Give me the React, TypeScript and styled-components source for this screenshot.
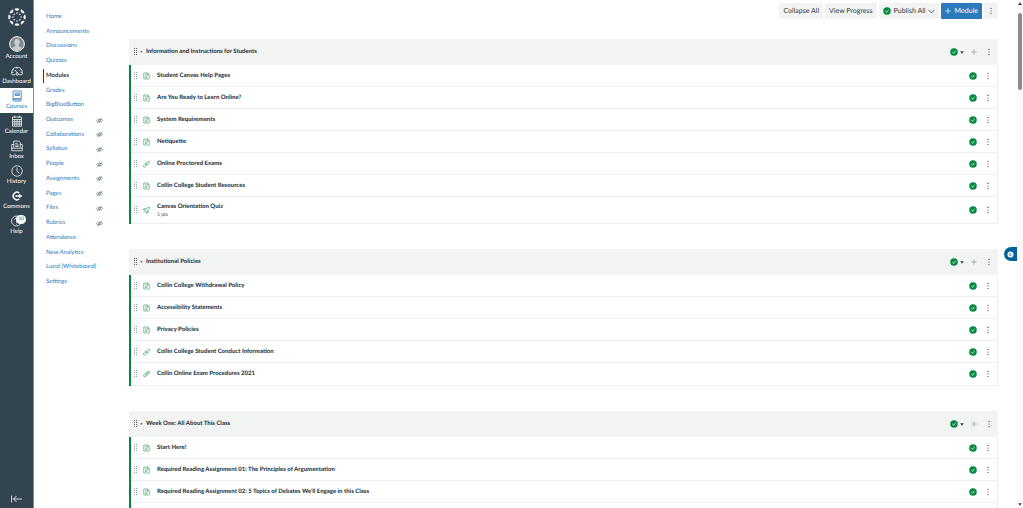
import React from "react";
import styled, { createGlobalStyle } from "styled-components";

const ink = "#2d3b45";
const link = "#2b7abc";
const green = "#03893d";
const panel = "#f2f4f4";

const GlobalStyle = createGlobalStyle`
  *, *::before, *::after { box-sizing: border-box; }
  body { margin: 0; background: #fff; color: ${ink}; font: 6px/10px Lato, "Liberation Sans", sans-serif; text-rendering: geometricPrecision; overflow: hidden; }
  button { font: inherit; color: inherit; border: 0; padding: 0; background: none; cursor: pointer; text-rendering: inherit; }
  a { text-decoration: none; color: inherit; }
  ul { list-style: none; margin: 0; padding: 0; }
  svg { display: block; flex: none; }
`;

const Shell = styled.div`
  display: grid;
  grid-template-columns: 34px 95px minmax(0, 1fr) 7px;
  height: 100vh;
  overflow: hidden;
`;

const Rail = styled.nav`
  display: flex;
  flex-direction: column;
  background: #334451;
  border-right: 1px solid #7d8890;
  color: #fff;
`;

const LogoLink = styled.a`
  display: grid;
  place-items: center;
  height: 34px;
`;

const RailLink = styled.a<{ $active?: boolean; $tall?: boolean }>`
  position: relative;
  display: flex;
  flex-direction: column;
  align-items: center;
  justify-content: flex-end;
  gap: 1px;
  height: ${(p) => (p.$tall ? 29 : 25)}px;
  padding-bottom: 2px;
  line-height: 8px;
  color: ${(p) => (p.$active ? link : "#fff")};
  background: ${(p) => (p.$active ? "#fff" : "transparent")};
`;

const Badge = styled.span`
  position: absolute;
  top: 2px;
  right: 7px;
  padding: 0 2px;
  border-radius: 5px;
  background: #fff;
  color: ${ink};
  font-size: 5px;
  line-height: 9px;
`;

const CollapseRail = styled.button`
  display: grid;
  place-items: center;
  height: 18px;
  margin-top: auto;
`;

const CourseNav = styled.nav`
  padding: 10px 26px 0 12px;
`;

const CourseList = styled.ul`
  display: flex;
  flex-direction: column;
  justify-content: space-between;
  min-height: 279px;
`;

const CourseItem = styled.li<{ $active?: boolean }>`
  display: flex;
  align-items: center;
  justify-content: space-between;
  height: 14px;
  margin-left: -3px;
  padding-left: 3px;
  white-space: nowrap;
  font-weight: ${(p) => (p.$active ? 700 : 400)};
  color: ${(p) => (p.$active ? ink : link)};
  box-shadow: ${(p) => (p.$active ? `inset 1px 0 ${ink}` : "none")};
`;

const Main = styled.main`
  display: flex;
  flex-direction: column;
  min-width: 0;
  min-height: 0;
  padding: 3px 18px 0 0;
`;

const Toolbar = styled.div`
  display: flex;
  justify-content: flex-end;
  gap: 2px;
  margin-bottom: 20px;
`;

const ToolButton = styled.button<{ $primary?: boolean }>`
  display: flex;
  align-items: center;
  justify-content: center;
  gap: 3px;
  min-width: 14px;
  height: 16px;
  padding: 0 4px;
  border-radius: 1px;
  font-size: 7px;
  background: ${(p) => (p.$primary ? link : panel)};
  color: ${(p) => (p.$primary ? "#fff" : ink)};
`;

const Modules = styled.div`
  display: flex;
  flex: 1;
  flex-direction: column;
  gap: 25px;
`;

const Module = styled.section`
  display: flex;
  flex-direction: column;
  flex: none;
  &:last-child { flex: 1; }
`;

const ModuleHeader = styled.header`
  display: flex;
  align-items: center;
  height: 26px;
  padding: 0 2px 0 5px;
  background: ${panel};
`;

const ModuleTitle = styled.h2`
  flex: 1;
  margin: 0 0 0 3px;
  font-size: 6px;
  line-height: 10px;
  font-weight: 900;
`;

const Toggle = styled.button`
  margin-left: 2px;
`;

const ItemList = styled.ul`
  flex: 1;
  border-left: 2px solid ${green};
  border-right: 1px solid #eceeef;
`;

const Item = styled.li<{ $height: number }>`
  display: flex;
  align-items: center;
  height: ${(p) => p.$height}px;
  padding: 0 2px 0 3px;
  border-bottom: 1px solid #eceeef;
`;

const ItemIcon = styled.span`
  margin: 0 7px 0 5px;
`;

const ItemText = styled.div`
  flex: 1;
  min-width: 0;
`;

const ItemLink = styled.a`
  display: block;
  font-weight: 900;
`;

const Points = styled.span`
  display: block;
  font-size: 5px;
  line-height: 7px;
`;

const Actions = styled.div`
  display: flex;
  align-items: center;
`;

const IconButton = styled.button<{ $width?: number }>`
  display: flex;
  align-items: center;
  justify-content: center;
  gap: 2px;
  width: ${(p) => p.$width ?? 14}px;
  height: 12px;
`;

const ScrollTrack = styled.div`
  display: flex;
  flex-direction: column;
  align-items: center;
  justify-content: space-between;
  padding: 2px 0;
  background: #fafafa;
`;

const ScrollThumb = styled.div`
  width: 4px;
  height: 77px;
  margin: 8px 0 auto;
  border-radius: 2px;
  background: #8b8b8b;
`;

const HelpTab = styled.button`
  position: fixed;
  top: 247px;
  right: 6px;
  display: grid;
  place-items: center;
  width: 13px;
  height: 14px;
  border-radius: 7px 0 0 7px;
  background: #00629b;
`;

const Check = () => (
  <svg width="8" height="8" viewBox="0 0 16 16" aria-hidden="true">
    <circle cx="8" cy="8" r="7.5" fill={green} />
    <path d="M4.8 8.2 7 10.3 11.2 6.2" fill="none" stroke="#fff" strokeWidth="1.8" />
  </svg>
);

const Kebab = () => (
  <svg width="2" height="8" viewBox="0 0 2 8" fill={ink} aria-hidden="true">
    <circle cx="1" cy="1.4" r=".6" />
    <circle cx="1" cy="4" r=".6" />
    <circle cx="1" cy="6.6" r=".6" />
  </svg>
);

const Grip = ({ color = "#7b8892" }: { color?: string }) => (
  <svg width="4" height="8" viewBox="0 0 4 8" fill={color} aria-hidden="true">
    {[0, 2, 4, 6].map((y) => (
      <g key={y}>
        <rect x="0.1" y={y + 0.1} width="0.9" height="0.9" />
        <rect x="2.1" y={y + 0.1} width="0.9" height="0.9" />
      </g>
    ))}
  </svg>
);

const Caret = ({ up = false, small = false }: { up?: boolean; small?: boolean }) => (
  <svg width={small ? 3 : 4} height={small ? 2 : 3} viewBox="0 0 4 3" fill={ink} aria-hidden="true">
    <path d={up ? "M0 3 2 .2 4 3Z" : "M.2 .2H3.8L2 2.8Z"} />
  </svg>
);

const Plus = ({ color }: { color: string }) => (
  <svg width="6" height="6" viewBox="0 0 6 6" stroke={color} strokeWidth=".7" aria-hidden="true">
    <path d="M3 .3V5.7M.3 3H5.7" />
  </svg>
);

const Hidden = () => (
  <svg width="7" height="7" viewBox="0 0 14 14" fill="none" stroke="#56646f" strokeWidth="1.1" role="img" aria-label="Hidden">
    <path d="M.8 7.5C3 3.8 10 2.6 13.2 6.5 11 10.8 4 11.6.8 7.5Z" />
    <circle cx="7" cy="7.2" r="2" />
    <path d="M2 12.5 12.5 1.5" />
  </svg>
);

type Kind = "page" | "link" | "quiz" | "file";

const KindIcon = ({ kind }: { kind: Kind }) => (
  <svg width="7" height="8" viewBox="0 0 14 16" fill="none" stroke="#2f9a60" strokeWidth="1.2" aria-hidden="true">
    {kind === "page" && <path d="M1.5 2H9.2L12.5 5.3V14H1.5ZM9 2V5.6H12.5M4 5.5H7M4 8.3H10M4 11H8" />}
    {kind === "link" && (
      <g>
        <rect x="6.4" y="3.6" width="7.6" height="4.4" rx="2.2" transform="rotate(-45 10.2 5.8)" />
        <rect x="0" y="8.8" width="7.6" height="4.4" rx="2.2" transform="rotate(-45 3.8 11)" />
        <path d="M5 10 9 6.4" />
      </g>
    )}
    {kind === "quiz" && (
      <path d="M4.2 8.6C6 4.8 9 2.6 13 2.6 13 6.6 10.8 9.8 7 11.5ZM5.5 5.2 1.5 5 1 8.2 4.2 8.6M7 11.5 6.6 14.6 10.2 14 10.4 9.4M3.8 10.6 1 13.6M8.6 6.8H9.8" />
    )}
    {kind === "file" && (
      <path d="M3.4 11.2 9.8 5.4C11.4 4.2 12.8 5.8 11.4 7.2L5.4 12.8C2.6 15-.8 11.6 1.8 9L8.6 3C11.4.8 15 4.2 12.6 7.2M4.8 10 9 6.4" />
    )}
  </svg>
);

const Logo = () => (
  <svg width="18" height="18" viewBox="0 0 36 36" fill="#fff" role="img" aria-label="Canvas">
    {[0, 45, 90, 135, 180, 225, 270, 315].map((a) => (
      <g key={a} transform={`rotate(${a} 18 18)`}>
        <path d="M12.9 1.4A17 17 0 0 1 23.1 1.4A5.3 5.3 0 0 1 12.9 1.4Z" />
        <circle cx="18" cy="10" r="1.5" />
      </g>
    ))}
  </svg>
);

const RailSvg = ({ size = 12, children }: { size?: number; children: React.ReactNode }) => (
  <svg width={size} height={size} viewBox="0 0 24 24" fill="none" stroke="currentColor" strokeWidth="1.5" aria-hidden="true">
    {children}
  </svg>
);

const railItems: { label: string; icon: React.ReactNode; badge?: string }[] = [
  {
    label: "Account",
    icon: (
      <RailSvg size={16}>
        <circle cx="12" cy="12" r="11" fill="#7d888f" />
        <path d="M4.5 19.5C5 15.8 9.8 16.4 9.7 14 6.4 10 7.6 4.5 12 4.5S17.6 10 14.3 14C14.2 16.4 19 15.8 19.5 19.5 15.5 23.5 8.5 23.5 4.5 19.5Z" fill="#c6cbce" stroke="none" />
      </RailSvg>
    ),
  },
  {
    label: "Dashboard",
    icon: (
      <RailSvg>
        <path d="M2 19.5C-.5 9.5 5 4.5 12 4.5S24.5 9.5 22 19.5H15.5M2 19.5H8.5M12 4.5V8M4.5 9 7 11M19.5 9 17 11M1.5 14.5H5M19 14.5H22.5M8.5 10 13 17" />
        <circle cx="12.5" cy="18" r="2.5" />
      </RailSvg>
    ),
  },
  {
    label: "Courses",
    icon: (
      <RailSvg>
        <path d="M4 2H20.5V17H6C3 17 3 22 6 22H20.5M4 2V20M20 17V22M8 6H17V11H8ZM8 8.5H17M5 19.5H19" />
      </RailSvg>
    ),
  },
  {
    label: "Calendar",
    icon: (
      <RailSvg>
        <path d="M3 4H21V22.5H3ZM3 9H21M7.5 1V6M16.5 1V6M7.5 9V22M12 9V22M16.5 9V22M3 13.5H21M3 18H21" />
      </RailSvg>
    ),
  },
  {
    label: "Inbox",
    icon: (
      <RailSvg>
        <path d="M5.5 15V2H15.5L18.5 5V15M5.5 9H1.5V21.5H22.5V9H18.5M1.5 16.5H22.5M8.5 6.5H13M8.5 10H15.5M8.5 13H15.5" />
      </RailSvg>
    ),
  },
  {
    label: "History",
    icon: (
      <RailSvg>
        <circle cx="12" cy="12" r="10.5" />
        <path d="M12 5V12.5L17 16.5" />
      </RailSvg>
    ),
  },
  {
    label: "Commons",
    icon: (
      <RailSvg>
        <path d="M16.5 6A7.5 7.5 0 1 0 16.5 18M9 12H19" strokeWidth="3" />
        <path d="M16.5 7.5 22.5 12 16.5 16.5Z" fill="currentColor" stroke="none" />
      </RailSvg>
    ),
  },
  {
    label: "Help",
    badge: "10",
    icon: (
      <RailSvg>
        <circle cx="11" cy="12" r="10" />
        <path d="M7.5 9.5C7.5 4.5 15 5 14.5 9.5 14 12 11 12 11 15.5M11 17.5V19.5" />
      </RailSvg>
    ),
  },
];

const courseLinks: [string, boolean?][] = [
  ["Home"], ["Announcements"], ["Discussions"], ["Quizzes"], ["Modules"], ["Grades"], ["BigBlueButton"],
  ["Outcomes", true], ["Collaborations", true], ["Syllabus", true], ["People", true], ["Assignments", true],
  ["Pages", true], ["Files", true], ["Rubrics", true],
  ["Attendance"], ["New Analytics"], ["Lucid (Whiteboard)"], ["Settings"],
];

type Entry = { title: string; kind?: Kind; points?: string; height?: number };

const modules: { title: string; items: Entry[] }[] = [
  {
    title: "Information and Instructions for Students",
    items: [
      { title: "Student Canvas Help Pages" },
      { title: "Are You Ready to Learn Online?" },
      { title: "System Requirements" },
      { title: "Netiquette" },
      { title: "Online Proctored Exams", kind: "link" },
      { title: "Collin College Student Resources" },
      { title: "Canvas Orientation Quiz", kind: "quiz", points: "5 pts", height: 27 },
    ],
  },
  {
    title: "Institutional Policies",
    items: [
      { title: "Collin College Withdrawal Policy" },
      { title: "Accessibility Statements" },
      { title: "Privacy Policies" },
      { title: "Collin College Student Conduct Information", kind: "link" },
      { title: "Collin Online Exam Procedures 2021", kind: "file", height: 23 },
    ],
  },
  {
    title: "Week One: All About This Class",
    items: [
      { title: "Start Here!" },
      { title: "Required Reading Assignment 01: The Principles of Argumentation" },
      { title: "Required Reading Assignment 02: 5 Topics of Debates We'll Engage in this Class" },
    ],
  },
];

export default function App() {
  return (
    <>
      <GlobalStyle />
      <Shell>
        <Rail>
          <LogoLink href="#"><Logo /></LogoLink>
          {railItems.map((r) => (
            <RailLink key={r.label} href="#" $active={r.label === "Courses"} $tall={r.label === "Account"}>
              {r.icon}
              {r.label}
              {r.badge && <Badge>{r.badge}</Badge>}
            </RailLink>
          ))}
          <CollapseRail aria-label="Minimize navigation">
            <svg width="11" height="8" viewBox="0 0 11 8" fill="none" stroke="#fff" strokeWidth=".8">
              <path d="M.6 .5V7.5M11 4H2.5M5.5 1 2.5 4 5.5 7" />
            </svg>
          </CollapseRail>
        </Rail>
        <CourseNav>
          <CourseList>
            {courseLinks.map(([label, hidden]) => (
              <CourseItem key={label} $active={label === "Modules"}>
                <a href="#">{label}</a>
                {hidden && <Hidden />}
              </CourseItem>
            ))}
          </CourseList>
        </CourseNav>
        <Main>
          <Toolbar>
            <ToolButton>Collapse All</ToolButton>
            <ToolButton>View Progress</ToolButton>
            <ToolButton>
              <Check />
              Publish All
              <svg width="7" height="5" viewBox="0 0 7 5" fill="none" stroke={ink} strokeWidth=".7">
                <path d="M.4 .8 3.5 4 6.6 .8" />
              </svg>
            </ToolButton>
            <ToolButton $primary><Plus color="#fff" />Module</ToolButton>
            <ToolButton aria-label="More options"><Kebab /></ToolButton>
          </Toolbar>
          <Modules>
            {modules.map((m) => (
              <Module key={m.title}>
                <ModuleHeader>
                  <Grip color={ink} />
                  <Toggle aria-label="Toggle module"><Caret small /></Toggle>
                  <ModuleTitle>{m.title}</ModuleTitle>
                  <Actions>
                    <IconButton $width={18} aria-label="Published"><Check /><Caret /></IconButton>
                    <IconButton $width={16} aria-label="Add item"><Plus color="#8b959c" /></IconButton>
                    <IconButton aria-label="Module options"><Kebab /></IconButton>
                  </Actions>
                </ModuleHeader>
                <ItemList>
                  {m.items.map((it) => (
                    <Item key={it.title} $height={it.height ?? 22}>
                      <Grip />
                      <ItemIcon><KindIcon kind={it.kind ?? "page"} /></ItemIcon>
                      <ItemText>
                        <ItemLink href="#">{it.title}</ItemLink>
                        {it.points && <Points>{it.points}</Points>}
                      </ItemText>
                      <Actions>
                        <IconButton $width={16} aria-label="Published"><Check /></IconButton>
                        <IconButton aria-label="Item options"><Kebab /></IconButton>
                      </Actions>
                    </Item>
                  ))}
                </ItemList>
              </Module>
            ))}
          </Modules>
        </Main>
        <ScrollTrack>
          <Caret up />
          <ScrollThumb />
          <Caret />
        </ScrollTrack>
      </Shell>
      <HelpTab aria-label="Open assistant">
        <svg width="7" height="7" viewBox="0 0 14 14">
          <circle cx="7" cy="7" r="6" fill="#fff" />
          <path d="M4 5.5H7M4 8.5H9M9 5.5H10" stroke="#00629b" strokeWidth="1.5" />
        </svg>
      </HelpTab>
    </>
  );
}
